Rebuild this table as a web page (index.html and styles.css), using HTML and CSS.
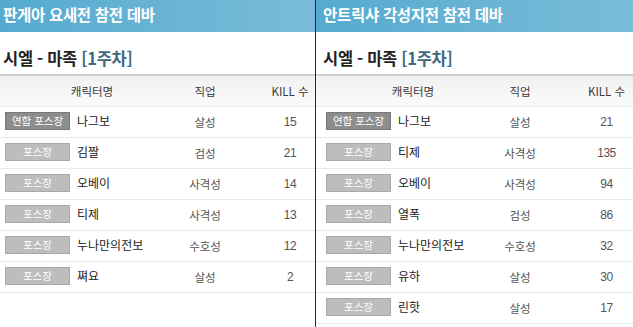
FILE: index.html
```html
<!DOCTYPE html>
<html lang="ko">
<head>
<meta charset="utf-8">
<link rel="stylesheet" href="styles.css">
</head>
<body>
<div class="wrap">
  <section class="panel panel-left">
    <h2 class="band">판게아 요새전 참전 데바</h2>
    <h3 class="sub">시엘 - 마족 <span class="week">[1주차]</span></h3>
    <div class="grid head">
      <div class="c1">캐릭터명</div><div class="c2">직업</div><div class="c3">KILL 수</div>
    </div>
    <div class="grid row"><div class="c1"><span class="tag dark">연합 포스장</span><span class="name">나그보</span></div><div class="c2">살성</div><div class="c3">15</div></div>
    <div class="grid row"><div class="c1"><span class="tag">포스장</span><span class="name">김짤</span></div><div class="c2">검성</div><div class="c3">21</div></div>
    <div class="grid row"><div class="c1"><span class="tag">포스장</span><span class="name">오베이</span></div><div class="c2">사격성</div><div class="c3">14</div></div>
    <div class="grid row"><div class="c1"><span class="tag">포스장</span><span class="name">티제</span></div><div class="c2">사격성</div><div class="c3">13</div></div>
    <div class="grid row"><div class="c1"><span class="tag">포스장</span><span class="name">누나만의전보</span></div><div class="c2">수호성</div><div class="c3">12</div></div>
    <div class="grid row"><div class="c1"><span class="tag">포스장</span><span class="name">쪄요</span></div><div class="c2">살성</div><div class="c3">2</div></div>
  </section>
  <div class="divider"></div>
  <section class="panel panel-right">
    <h2 class="band">안트릭샤 각성지전 참전 데바</h2>
    <h3 class="sub">시엘 - 마족 <span class="week">[1주차]</span></h3>
    <div class="grid head">
      <div class="c1">캐릭터명</div><div class="c2">직업</div><div class="c3">KILL 수</div>
    </div>
    <div class="grid row"><div class="c1"><span class="tag dark">연합 포스장</span><span class="name">나그보</span></div><div class="c2">살성</div><div class="c3">21</div></div>
    <div class="grid row"><div class="c1"><span class="tag">포스장</span><span class="name">티제</span></div><div class="c2">사격성</div><div class="c3">135</div></div>
    <div class="grid row"><div class="c1"><span class="tag">포스장</span><span class="name">오베이</span></div><div class="c2">사격성</div><div class="c3">94</div></div>
    <div class="grid row"><div class="c1"><span class="tag">포스장</span><span class="name">열폭</span></div><div class="c2">검성</div><div class="c3">86</div></div>
    <div class="grid row"><div class="c1"><span class="tag">포스장</span><span class="name">누나만의전보</span></div><div class="c2">수호성</div><div class="c3">32</div></div>
    <div class="grid row"><div class="c1"><span class="tag">포스장</span><span class="name">유하</span></div><div class="c2">살성</div><div class="c3">30</div></div>
    <div class="grid row"><div class="c1"><span class="tag">포스장</span><span class="name">린핫</span></div><div class="c2">살성</div><div class="c3">17</div></div>
  </section>
</div>
</body>
</html>
```
FILE: styles.css
```css
html, body {
  margin: 0;
  padding: 0;
  background: #fff;
  height: 100%;
  overflow: hidden;
}
body {
  font-family: "Noto Sans CJK KR", "Noto Sans", sans-serif;
  color: #222;
}
.wrap {
  display: flex;
  height: 327px;
}
.panel {
  overflow: hidden;
}
.panel-left {
  width: 315px;
  --pad: 3px;
  --tag: 5px;
  --c1: 155px;
  --c2: 100px;
  --h1pad: 29px;
  --k: 10px;
}
.panel-right {
  width: 317px;
  --pad: 7px;
  --tag: 10px;
  --c1: 160px;
  --c2: 88px;
  --h1pad: 34px;
  --k: 16px;
}
.divider {
  width: 1px;
  background: #2a2a18;
}
.band {
  margin: 0;
  height: 32px;
  line-height: 28px;
  padding-left: var(--pad);
  background: linear-gradient(to right, #55aacf, #7abcd9);
  color: #fff;
  font-size: 15.5px;
  font-weight: bold;
  letter-spacing: -0.3px;
  box-sizing: border-box;
}
.sub {
  margin: 0;
  padding: 16px 0 6px var(--pad);
  line-height: 20px;
  font-size: 16.5px;
  font-weight: bold;
  color: #222;
  letter-spacing: -0.3px;
}
.week {
  color: #3d6a80;
}
.grid {
  display: grid;
  grid-template-columns: var(--c1) var(--c2) 1fr;
  align-items: center;
  height: 31px;
  box-sizing: border-box;
  border-bottom: 1px solid #e9e9e9;
}
.head {
  border-top: 2px solid #cdd1d5;
  height: 33px;
  background: linear-gradient(to bottom, #f1f1f1, #fbfbfb);
  font-size: 11.5px;
  color: #3a3a3a;
}
.head .c1 {
  text-align: center;
  padding-left: var(--h1pad);
}
.c2 {
  text-align: center;
}
.c3 {
  text-align: center;
  padding-left: var(--k);
}
.row .c1 {
  display: flex;
  align-items: center;
  padding-left: var(--tag);
}
.tag {
  display: inline-block;
  width: 65px;
  height: 18px;
  box-sizing: border-box;
  border: 1px solid #a9a9a9;
  background: #bdbdbd;
  color: #fff;
  font-size: 10.5px;
  line-height: 16px;
  text-align: center;
  margin-right: 7px;
  margin-top: -2px;
}
.tag.dark {
  background: #8d8d8d;
  border-color: #777;
}
.name {
  font-size: 12px;
  color: #222;
  margin-top: -3px;
}
.row .c2 {
  font-size: 11.5px;
  color: #555;
}
.row .c3 {
  font-family: "Liberation Sans", sans-serif;
  font-size: 12px;
  color: #555;
  letter-spacing: -0.5px;
}
```
